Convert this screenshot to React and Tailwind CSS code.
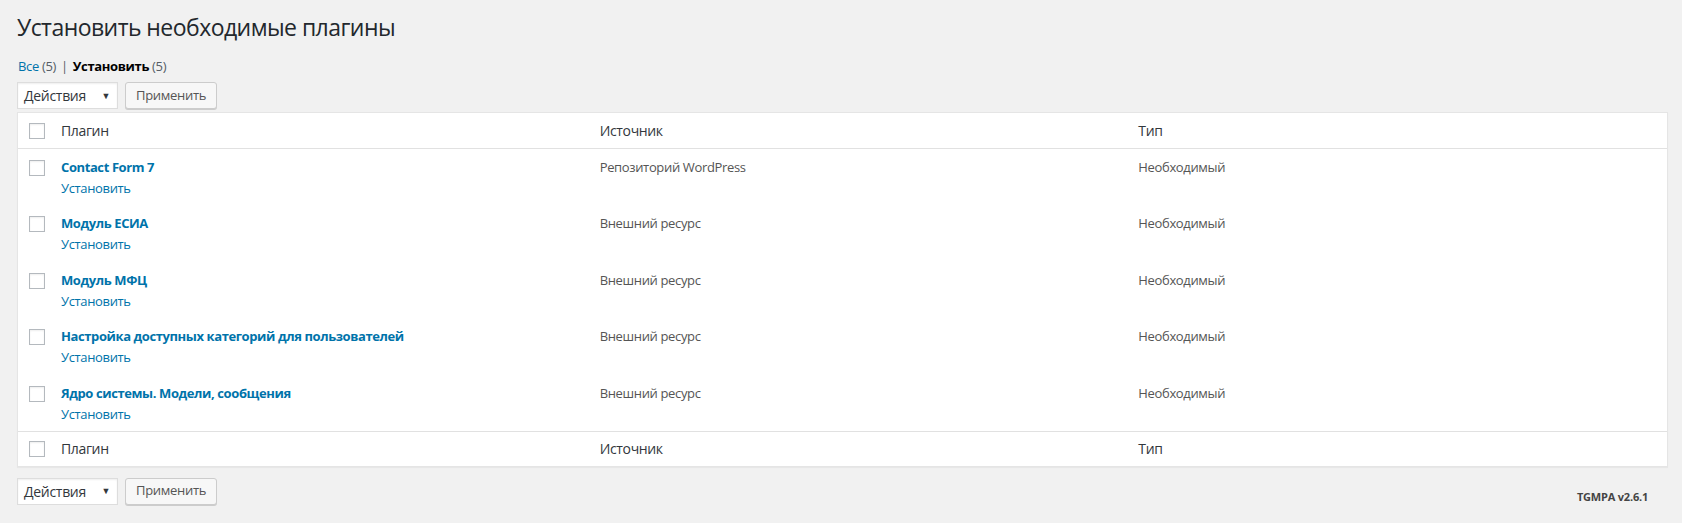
import React from "react";

const plugins = [
  { name: "Contact Form 7", source: "Репозиторий WordPress" },
  { name: "Модуль ЕСИА", source: "Внешний ресурс" },
  { name: "Модуль МФЦ", source: "Внешний ресурс" },
  { name: "Настройка доступных категорий для пользователей", source: "Внешний ресурс" },
  { name: "Ядро системы. Модели, сообщения", source: "Внешний ресурс" },
];

const Checkbox = () => (
  <span className="block w-4 h-4 bg-white border border-[#b4b9be] shadow-[inset_0_1px_2px_rgba(0,0,0,0.07)]"></span>
);

const BulkActions = () => (
  <div className="flex items-center gap-[7px]">
    <div className="w-[101px] h-[27px] bg-white border border-[#ddd] shadow-[inset_0_1px_2px_rgba(0,0,0,0.07)] flex items-center justify-between pl-[6px] pr-[7px] text-[14px] tracking-[-0.3px] text-[#32373c]">
      <span>Действия</span>
      <span className="text-[9px] text-[#32373c]">▼</span>
    </div>
    <button className="h-[27px] px-[10px] bg-[#f7f7f7] border border-[#ccc] rounded-[3px] shadow-[0_1px_0_#ccc] text-[13px] tracking-[-0.3px] text-[#555]">
      Применить
    </button>
  </div>
);

const HeadRow = ({ top }) => (
  <div className={`flex items-center ${top ? "h-[36px] border-b" : "h-[35px] border-t"} border-[#e1e1e1] text-[14px] tracking-[-0.35px] text-[#32373c]`}>
    <div className="w-[33px] pl-[11px]">
      <Checkbox />
    </div>
    <div className="flex-1 pl-[10px]">Плагин</div>
    <div className="flex-1 pl-[10px]">Источник</div>
    <div className="flex-1 pl-[10px]">Тип</div>
  </div>
);

export default function App() {
  return (
    <div className="min-h-[523px] bg-[#f1f1f1] pl-[17px] pr-[14px] font-['Open_Sans',sans-serif] text-[13px] tracking-[-0.35px] text-[#444]">
      <h1 className="pt-[13px] text-[23px] leading-[29px] tracking-[-0.55px] text-[#23282d]">Установить необходимые плагины</h1>

      <div className="mt-[11px] pl-[1px] leading-[26px] text-[13px] text-[#555d66]">
        <span className="text-[#0073aa]">Все</span> (5) <span className="px-[2px]">|</span>{" "}
        <span className="font-bold text-black">Установить</span> (5)
      </div>

      <div className="mt-[3px]">
        <BulkActions />
      </div>

      <div className="mt-[3px] bg-white border border-[#e5e5e5] shadow-[0_1px_1px_rgba(0,0,0,0.04)]">
        <HeadRow top />
        {plugins.map((p) => (
          <div key={p.name} className="flex h-[56.4px] pt-[9px]">
            <div className="w-[33px] pl-[11px] pt-[2px]">
              <Checkbox />
            </div>
            <div className="flex-1 pl-[10px]">
              <div className="font-bold text-[13px] leading-[19px] tracking-[-0.4px] text-[#0073aa]">{p.name}</div>
              <div className="mt-[2px] text-[13px] leading-[19px] text-[#0073aa]">Установить</div>
            </div>
            <div className="flex-1 pl-[10px] leading-[19px] text-[#555]">{p.source}</div>
            <div className="flex-1 pl-[10px] leading-[19px] text-[#555]">Необходимый</div>
          </div>
        ))}
        <HeadRow />
      </div>

      <div className="mt-[10px] flex items-center justify-between">
        <BulkActions />
        <span className="pt-[12px] pr-[20px] text-[11px] font-bold tracking-[-0.2px] text-[#444]">TGMPA v2.6.1</span>
      </div>
    </div>
  );
}
